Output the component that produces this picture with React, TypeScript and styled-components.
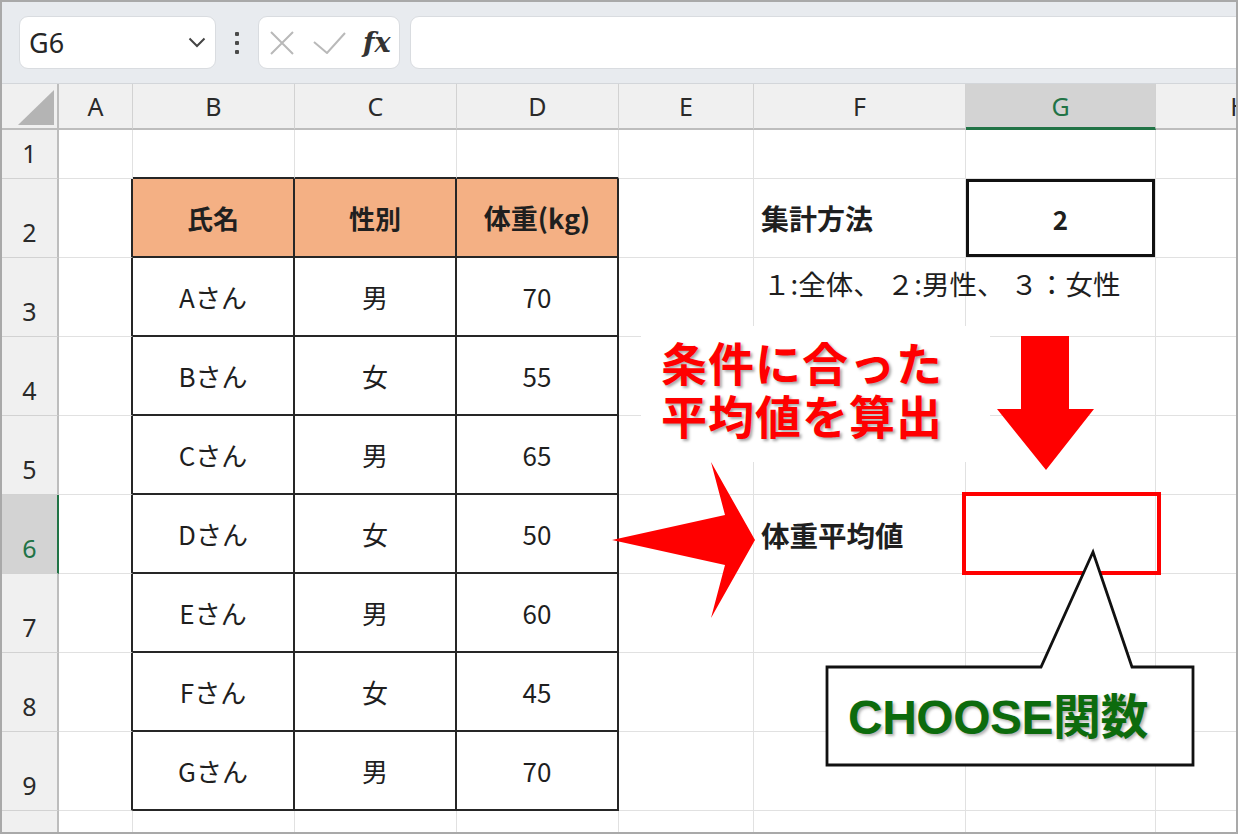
import React from 'react'
import styled, { createGlobalStyle, css } from 'styled-components'

const GlobalStyle = createGlobalStyle`
  html, body { margin: 0; padding: 0; background: #fff; }
  body { font-family: 'Noto Sans CJK JP', 'Noto Sans', sans-serif; }
`

const Frame = styled.div`
  position: relative;
  width: 1238px;
  height: 834px;
  box-sizing: border-box;
  border: 2px solid #a9a9a9;
  overflow: hidden;
  display: flex;
  flex-direction: column;
  background: #fff;
`

const Toolbar = styled.div`
  flex: none;
  height: 82px;
  box-sizing: border-box;
  background: #e8ebef;
  border-bottom: 1px solid #d3d6da;
  display: flex;
  align-items: center;
  padding-left: 17px;
`

const Box = styled.div`
  height: 53px;
  box-sizing: border-box;
  background: #fff;
  border: 1px solid #d9dce0;
  border-radius: 9px;
  display: flex;
  align-items: center;
`

const NameBox = styled(Box)`
  width: 197px;
  justify-content: space-between;
  padding: 0 9px 0 9px;
  font-family: 'Noto Sans', sans-serif;
  font-size: 27px;
  color: #262626;
`

const Dots = styled.div`
  width: 42px;
  display: flex;
  flex-direction: column;
  align-items: center;
  gap: 5px;
  span {
    width: 4px;
    height: 4px;
    border-radius: 1px;
    background: #4a4a4a;
  }
`

const FxBox = styled(Box)`
  width: 142px;
  padding-left: 11px;
  gap: 19px;
`

const Fx = styled.span`
  font-family: 'DejaVu Serif', 'Liberation Serif', serif;
  font-style: italic;
  font-weight: 700;
  font-size: 27px;
  color: #333;
  margin-left: -2px;
`

const FormulaBar = styled(Box)`
  flex: 1;
  margin-left: 10px;
  margin-right: -20px;
`

const Sheet = styled.div`
  display: grid;
  grid-template-columns: 57px 74px 162px 162px 162px 135px 212px 190px 168px;
  grid-template-rows: 46px 49px repeat(9, 79px);
  background: #fff;
`

const Corner = styled.div`
  box-sizing: border-box;
  background: #f0f0f0;
  border-right: 2px solid #bdbdbd;
  border-bottom: 2px solid #bdbdbd;
  display: flex;
  align-items: flex-end;
  justify-content: flex-end;
  padding: 0 3px 3px 0;
`

const ColHead = styled.div<{ $sel?: boolean }>`
  box-sizing: border-box;
  display: flex;
  align-items: center;
  justify-content: center;
  font-family: 'Noto Sans', sans-serif;
  font-size: 25px;
  color: ${p => (p.$sel ? '#217346' : '#2a2a2a')};
  background: ${p => (p.$sel ? '#d3d3d3' : '#f0f0f0')};
  border-right: 1px solid #d2d2d2;
  border-bottom: ${p => (p.$sel ? '3px solid #217346' : '2px solid #bdbdbd')};
`

const RowHead = styled.div<{ $sel?: boolean }>`
  box-sizing: border-box;
  display: flex;
  align-items: flex-end;
  justify-content: center;
  padding-bottom: 10px;
  font-family: 'Noto Sans', sans-serif;
  font-size: 25px;
  line-height: 30px;
  color: ${p => (p.$sel ? '#217346' : '#2a2a2a')};
  background: ${p => (p.$sel ? '#d3d3d3' : '#f0f0f0')};
  border-right: 2px solid ${p => (p.$sel ? '#217346' : '#bdbdbd')};
  border-bottom: 1px solid #d2d2d2;
`

type CellProps = {
  $rb?: boolean
  $bb?: boolean
  $fill?: string
  $bold?: boolean
  $left?: boolean
  $top?: boolean
  $boxed?: boolean
  $size?: number
}

const Cell = styled.div<CellProps>`
  box-sizing: border-box;
  display: flex;
  align-items: ${p => (p.$top ? 'flex-start' : 'center')};
  justify-content: ${p => (p.$left ? 'flex-start' : 'center')};
  padding: ${p => (p.$top ? '5px 0 0 9px' : p.$left ? '0 0 0 7px' : '0')};
  border-right: ${p => (p.$rb ? '2px solid #262626' : '1px solid #e1e1e1')};
  border-bottom: ${p => (p.$bb ? '2px solid #262626' : '1px solid #e1e1e1')};
  background: ${p => p.$fill ?? 'transparent'};
  font-size: ${p => p.$size ?? 26}px;
  font-weight: ${p => (p.$bold ? 700 : 400)};
  color: #1f1f1f;
  white-space: nowrap;
  ${p =>
    p.$boxed &&
    css`
      box-shadow: inset 0 0 0 3px #111;
    `}
`

const Caption = styled.div`
  position: absolute;
  left: 639px;
  top: 324px;
  width: 349px;
  height: 136px;
  box-sizing: border-box;
  padding: 9px 0 0 20px;
  background: #fff;
  color: #ff0000;
  font-size: 46px;
  font-weight: 700;
  letter-spacing: 1px;
  text-shadow: 2px 2px 3px rgba(0, 0, 0, 0.35);
`

const CaptionLine = styled.div`
  height: 53px;
  line-height: 53px;
`

const Shape = styled.svg<{ $l: number; $t: number }>`
  position: absolute;
  left: ${p => p.$l}px;
  top: ${p => p.$t}px;
  overflow: visible;
`

const RedFrame = styled.div`
  position: absolute;
  left: 960px;
  top: 490px;
  width: 199px;
  height: 83px;
  box-sizing: border-box;
  border: 4px solid #ff0000;
`

const Callout = styled.div`
  position: absolute;
  left: 822px;
  top: 547px;
  width: 375px;
  height: 222px;
`

const CalloutText = styled.div`
  position: relative;
  margin-top: 116px;
  height: 96px;
  padding-left: 24px;
  display: flex;
  align-items: center;
  font-family: 'Liberation Sans', 'Noto Sans CJK JP', sans-serif;
  font-size: 48px;
  font-weight: 700;
  letter-spacing: -0.5px;
  color: #0d6b0d;
  text-shadow: 2px 2px 3px rgba(0, 0, 0, 0.3);
`

const COLS = ['A', 'B', 'C', 'D', 'E', 'F', 'G', 'H']
const ROWS = [1, 2, 3, 4, 5, 6, 7, 8, 9, 10]

const people = [
  ['Aさん', '男', '70'],
  ['Bさん', '女', '55'],
  ['Cさん', '男', '65'],
  ['Dさん', '女', '50'],
  ['Eさん', '男', '60'],
  ['Fさん', '女', '45'],
  ['Gさん', '男', '70']
]

type Content = {
  text: string
  bold?: boolean
  left?: boolean
  top?: boolean
  boxed?: boolean
  fill?: string
  size?: number
}

const contents: Record<string, Content> = {
  B2: { text: '氏名', bold: true, fill: '#f4b084' },
  C2: { text: '性別', bold: true, fill: '#f4b084' },
  D2: { text: '体重(kg)', bold: true, fill: '#f4b084', size: 27 },
  F2: { text: '集計方法', bold: true, left: true, size: 28 },
  G2: { text: '2', bold: true, boxed: true },
  F3: { text: '１:全体、 ２:男性、 ３：女性', left: true, top: true, size: 27.5 },
  F6: { text: '体重平均値', bold: true, left: true, size: 28.5 }
}
people.forEach((p, i) => {
  contents[`B${i + 3}`] = { text: p[0] }
  contents[`C${i + 3}`] = { text: p[1] }
  contents[`D${i + 3}`] = { text: p[2] }
})

export default function App() {
  return (
    <>
      <GlobalStyle />
      <Frame>
        <Toolbar>
          <NameBox>
            <span>G6</span>
            <svg width="18" height="11" viewBox="0 0 18 11">
              <polyline points="1.5,1.5 9,9 16.5,1.5" fill="none" stroke="#444" strokeWidth="2" />
            </svg>
          </NameBox>
          <Dots>
            <span />
            <span />
            <span />
          </Dots>
          <FxBox>
            <svg width="24" height="24" viewBox="0 0 24 24">
              <path d="M1 1 L23 23 M23 1 L1 23" stroke="#b9b9b9" strokeWidth="2" />
            </svg>
            <svg width="33" height="22" viewBox="0 0 33 22">
              <polyline points="1,10 14,21 32,1" fill="none" stroke="#b9b9b9" strokeWidth="2" />
            </svg>
            <Fx>fx</Fx>
          </FxBox>
          <FormulaBar />
        </Toolbar>
        <Sheet>
          <Corner>
            <svg width="36" height="35" viewBox="0 0 36 35">
              <polygon points="0,35 36,0 36,35" fill="#b4b4b4" />
            </svg>
          </Corner>
          {COLS.map(c => (
            <ColHead key={c} $sel={c === 'G'}>
              {c}
            </ColHead>
          ))}
          {ROWS.map(r => (
            <React.Fragment key={r}>
              {/* row 10 lies mostly below the window; its number is out of view */}
              <RowHead $sel={r === 6}>{r < 10 ? r : ''}</RowHead>
              {COLS.map((c, ci) => {
                const k = contents[`${c}${r}`]
                const rb = r >= 2 && r <= 9 && ci <= 3
                const bb = r >= 1 && r <= 9 && ci >= 1 && ci <= 3
                return (
                  <Cell
                    key={c}
                    $rb={rb}
                    $bb={bb}
                    $fill={k?.fill}
                    $bold={k?.bold}
                    $left={k?.left}
                    $top={k?.top}
                    $boxed={k?.boxed}
                    $size={k?.size}
                  >
                    {k?.text}
                  </Cell>
                )
              })}
            </React.Fragment>
          ))}
        </Sheet>

        <Caption>
          <CaptionLine>条件に合った</CaptionLine>
          <CaptionLine>平均値を算出</CaptionLine>
        </Caption>

        <Shape $l={604} $t={454} width="152" height="166" viewBox="606 456 152 166">
          <polygon points="612,540 725,515 711,462 755,540 711,618 725,565" fill="#ff0000" />
        </Shape>

        <Shape $l={988} $t={328} width="110" height="145" viewBox="990 330 110 145">
          <polygon points="1021,336 1069,336 1069,409 1094,409 1046,470 997,409 1021,409" fill="#ff0000" />
        </Shape>

        <RedFrame />

        <Callout>
          <Shape $l={0} $t={0} width="375" height="222" viewBox="824 549 375 222">
            <path
              d="M827,667 L1041,667 L1093,552 L1132,667 L1193,667 L1193,765 L827,765 Z"
              fill="#fff"
              stroke="#111"
              strokeWidth="2.8"
            />
          </Shape>
          <CalloutText>CHOOSE関数</CalloutText>
        </Callout>
      </Frame>
    </>
  )
}
